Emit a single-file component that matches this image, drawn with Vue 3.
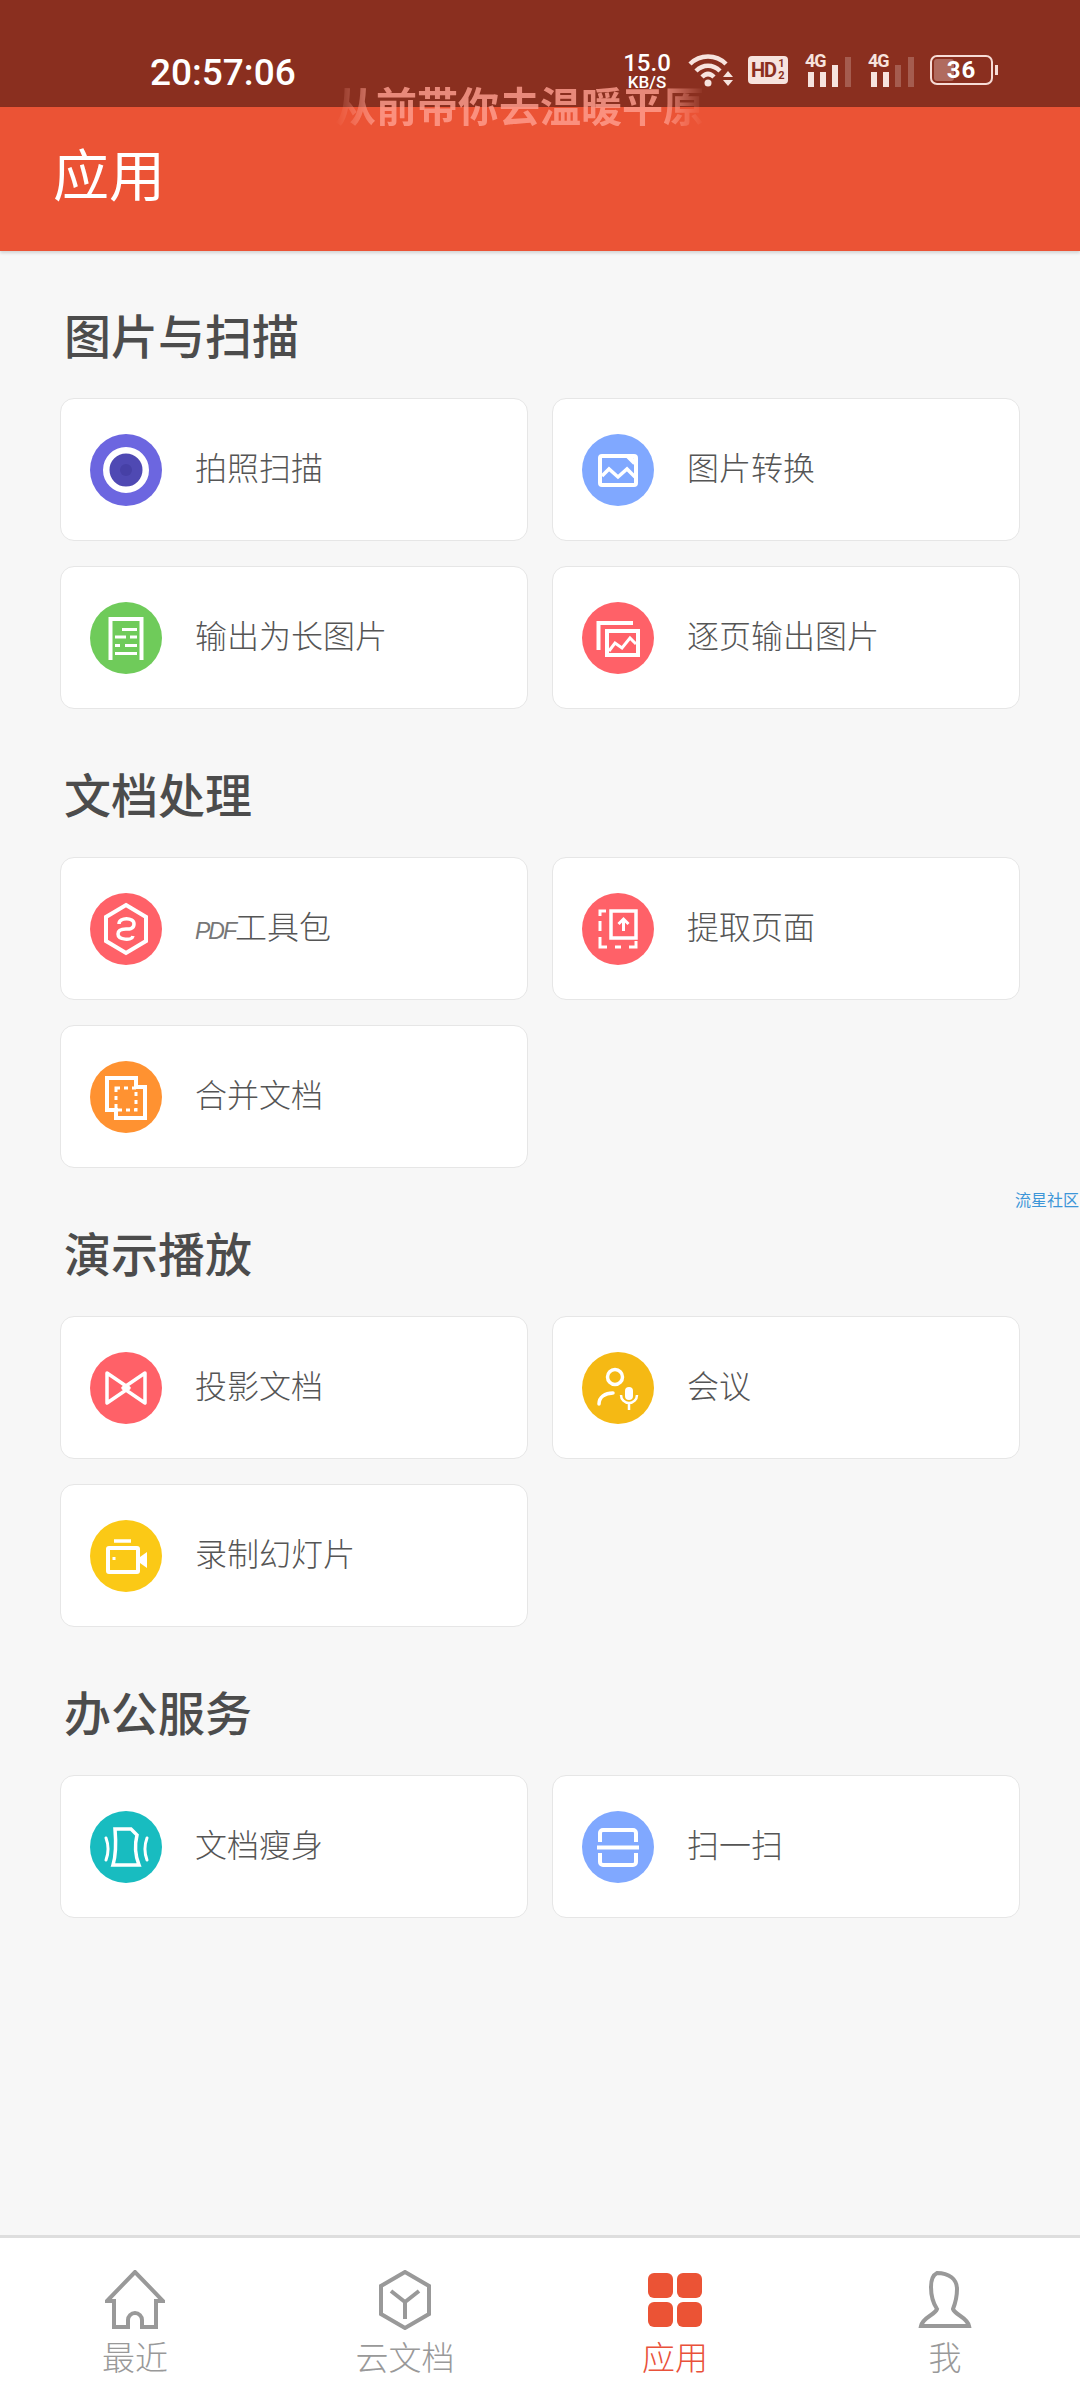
<script setup>
// icon bodies sit on a 72x72 coloured circle, white strokes by default
const icons = {
  camera: `<circle cx="36" cy="36" r="19.75" fill="#4f49b3" stroke="#fff" stroke-width="6.5"/><circle cx="36" cy="36" r="6" fill="#4640a6" stroke="none"/>`,
  image: `<rect x="18" y="22" width="36" height="29" rx="2"/><path d="M20 42L27 35L36 43L45 35L53 43" stroke-width="3.5"/><path d="M46 22L53 29" stroke-width="5" stroke="#fff"/>`,
  longimage: `<path d="M20.500 58V17H51.500V58"/><path d="M32 27.500H47M25 35H36M40 35H47M25 43.500H30M35 43.500H47M25 51.500H47" stroke-width="3"/>`,
  pages: `<path d="M16.500 48V21H51"/><rect x="25" y="29" width="31" height="24"/><path d="M27 49L33 41L40 46L48 36L54 42" stroke-width="3"/>`,
  pdf: `<path d="M36 12L56 24V48L36 60L16 48V24Z"/><path d="M29 31C29 24 44 24 44 31C44 37 37 36 36 36C35 36 28 36 28 41C28 47 42 48 43 43" stroke-width="3.500"/>`,
  extract: `<path d="M18 23V18H24M18 28V38M18 44V54H25M33 54H39M47 54H54V48" stroke-width="3"/><rect x="29" y="18" width="25" height="27" stroke-width="3.500"/><path d="M41.500 38V26M36.500 31L41.500 26L46.500 31" stroke-width="3"/>`,
  merge: `<path d="M17 17H46V26H55V57H26V49H17Z"/><rect x="26" y="27" width="20" height="22" stroke-width="3" stroke-dasharray="4 4"/>`,
  projector: `<path d="M17 21L39 36L17 51ZM55 21L33 36L55 51Z" stroke-width="3.500" stroke-linejoin="round"/>`,
  meeting: `<circle cx="33" cy="25" r="7.500" stroke-width="3.500"/><path d="M17 52C17 45 23 41 31 41" stroke-width="3.500" stroke-linecap="round"/><rect x="43" y="35" width="8" height="13" rx="4" fill="#fff" stroke="none"/><path d="M39 43A8 8 0 0 0 55 43M47 51V58" stroke-width="2.500"/>`,
  video: `<rect x="18" y="28" width="30" height="24" rx="1"/><path d="M24 21H41" stroke-width="3.500"/><path d="M50 37L57 32V48L50 43Z" fill="#fff" stroke="none"/><path d="M24 37V40" stroke-width="3"/>`,
  slim: `<path d="M25 18H41L47 24C45 32 45 44 49 54H23C26 44 26 30 25 18Z" stroke-width="3.500"/><path d="M16 27C19 35 19 41 16 49M57 27C54 35 54 41 57 49" stroke-width="3" stroke-linecap="round"/>`,
  scan: `<path d="M18 31V22A3 3 0 0 1 21 19H51A3 3 0 0 1 54 22V31M18 42V51A3 3 0 0 0 21 54H51A3 3 0 0 0 54 51V42"/><path d="M15 36.500H57"/>`,
}

const sections = [
  {
    title: '图片与扫描',
    items: [
      { label: '拍照扫描', icon: 'camera', color: '#6c66e0' },
      { label: '图片转换', icon: 'image', color: '#80a8ff' },
      { label: '输出为长图片', icon: 'longimage', color: '#6fcb5a' },
      { label: '逐页输出图片', icon: 'pages', color: '#ff6168' },
    ],
  },
  {
    title: '文档处理',
    items: [
      { prefix: 'PDF', label: '工具包', icon: 'pdf', color: '#ff6168' },
      { label: '提取页面', icon: 'extract', color: '#ff6168' },
      { label: '合并文档', icon: 'merge', color: '#ff9231' },
    ],
  },
  {
    title: '演示播放',
    items: [
      { label: '投影文档', icon: 'projector', color: '#ff6168' },
      { label: '会议', icon: 'meeting', color: '#f5b914' },
      { label: '录制幻灯片', icon: 'video', color: '#fbc916' },
    ],
  },
  {
    title: '办公服务',
    items: [
      { label: '文档瘦身', icon: 'slim', color: '#18bcc0' },
      { label: '扫一扫', icon: 'scan', color: '#80a8ff' },
    ],
  },
]

const tabs = [
  { label: '最近', svg: `<path d="M2 31L30 2L58 31H51V57H37V50A7 7 0 0 0 23 50V57H9V31Z"/>` },
  { label: '云文档', svg: `<path d="M30 2L54 16V44L30 58L6 44V16Z"/><path d="M16 21L30 32L44 21M30 32V49"/>` },
  {
    label: '应用',
    active: true,
    svg: `<g fill="#eb5335" stroke="none"><rect x="3" y="3" width="25" height="25" rx="6"/><rect x="32" y="3" width="25" height="25" rx="6"/><rect x="3" y="32" width="25" height="25" rx="6"/><rect x="32" y="32" width="25" height="25" rx="6"/></g>`,
  },
  { label: '我', svg: `<path d="M22 3C34 3 42 9 42 19C42 29 40 34 38 39C40 45 52 47 54 56H6C8 47 20 45 22 39C18 33 16 25 16 17C16 9 18 5 22 3Z"/>` },
]
</script>

<template>
  <div class="page">
    <div class="status-bar">
      <span class="clock">20:57:06</span>
      <div class="status-icons">
        <div class="speed">
          <span class="speed-num">15.0</span>
          <span class="speed-unit">KB/S</span>
        </div>
        <svg class="wifi" width="46" height="34" viewBox="0 0 46 34" fill="none" stroke="#f7e3de" stroke-width="4.500">
          <path d="M2 11C12 1 28 1 38 11M8 18C15 11 25 11 32 18M14 24C18 20 22 20 26 24"/>
          <circle cx="20" cy="30" r="3.500" fill="#f7e3de" stroke="none"/>
          <path d="M35 24L40 18L45 24ZM35 27L40 33L45 27Z" fill="#f7e3de" stroke="none"/>
        </svg>
        <div class="hd">HD<span class="hd-sub">1<br />2</span></div>
        <div v-for="n in [3, 2]" :key="n" class="signal">
          <span class="net">4G</span>
          <i v-for="b in 4" :key="b" :class="['bar', 'bar' + b, { off: b > n }]"></i>
        </div>
        <div class="battery">
          <div class="battery-level"></div>
          <span class="battery-num">36</span>
        </div>
      </div>
      <div class="ticker">从前带你去温暖平原</div>
    </div>

    <header class="app-bar">应用</header>

    <main class="content">
      <section v-for="s in sections" :key="s.title" class="group">
        <h2 class="group-title">{{ s.title }}</h2>
        <div class="grid">
          <div v-for="it in s.items" :key="it.label" class="card">
            <svg
              class="tool-icon"
              :style="{ background: it.color }"
              width="72"
              height="72"
              viewBox="0 0 72 72"
              fill="none"
              stroke="#fff"
              stroke-width="4"
              v-html="icons[it.icon]"
            ></svg>
            <span class="card-label"><span v-if="it.prefix" class="latin">{{ it.prefix }}</span>{{ it.label }}</span>
          </div>
        </div>
      </section>
    </main>

    <nav class="tabbar">
      <div v-for="t in tabs" :key="t.label" class="tab" :class="{ active: t.active }">
        <svg width="60" height="60" viewBox="0 0 60 60" fill="none" stroke="#999" stroke-width="4" v-html="t.svg"></svg>
        <span class="tab-label">{{ t.label }}</span>
      </div>
    </nav>

    <div class="side-mark">流星社区</div>
  </div>
</template>

<style>
html,
body {
  margin: 0;
  background: #f7f7f7;
}
</style>

<style scoped>
.page {
  position: relative;
  width: 1080px;
  height: 2400px;
  overflow: hidden;
  display: flex;
  flex-direction: column;
  background: #f7f7f7;
  font-family: "Noto Sans CJK SC", "Noto Sans", sans-serif;
}

.status-bar {
  position: relative;
  height: 107px;
  flex-shrink: 0;
  background: #8a2f1f;
  display: flex;
  align-items: flex-start;
  padding: 50px 87px 0 150px;
  box-sizing: border-box;
  color: #fbeeea;
}
.clock {
  font-family: Roboto, sans-serif;
  font-size: 37px;
  line-height: 46px;
  font-weight: 500;
  color: #fff;
}
.status-icons {
  margin-left: auto;
  display: flex;
  align-items: center;
  height: 40px;
  font-family: Roboto, sans-serif;
}
.speed {
  display: flex;
  flex-direction: column;
  align-items: center;
  width: 48px;
  margin-top: 2px;
  color: #fff;
  font-weight: 500;
}
.speed-num {
  font-size: 24px;
  line-height: 22px;
}
.speed-unit {
  font-size: 17px;
  line-height: 16px;
}
.wifi {
  margin-left: 17px;
}
.hd {
  margin-left: 14px;
  width: 40px;
  height: 28px;
  border-radius: 4px;
  background: #f7e3de;
  color: #8a2f1f;
  font-size: 20px;
  line-height: 28px;
  font-weight: 700;
  padding-left: 3px;
  box-sizing: border-box;
  display: flex;
  letter-spacing: -1px;
}
.hd-sub {
  font-size: 11px;
  line-height: 12px;
  margin: 2px 0 0 2px;
}
.signal {
  position: relative;
  width: 46px;
  height: 34px;
  margin-left: 17px;
}
.net {
  position: absolute;
  left: 0;
  top: -1px;
  font-size: 18px;
  line-height: 18px;
  font-weight: 700;
  color: #f7e3de;
  letter-spacing: -1px;
}
.bar {
  position: absolute;
  bottom: 0;
  width: 6px;
  background: #f7e3de;
}
.bar.off {
  background: rgba(247, 227, 222, 0.25);
}
.bar1 {
  left: 3px;
  height: 15px;
}
.bar2 {
  left: 15px;
  height: 15px;
}
.bar3 {
  left: 27px;
  height: 22px;
}
.bar4 {
  left: 40px;
  height: 30px;
}
.battery {
  position: relative;
  margin-left: 16px;
  width: 63px;
  height: 30px;
  border: 2px solid #f7dcd6;
  border-radius: 7px;
  box-sizing: border-box;
  text-align: center;
}
.battery::after {
  content: "";
  position: absolute;
  right: -7px;
  top: 8px;
  width: 3px;
  height: 10px;
  background: #f7dcd6;
}
.battery-level {
  position: absolute;
  left: 2px;
  top: 2px;
  bottom: 2px;
  width: 20px;
  border-radius: 3px;
  background: rgba(247, 220, 214, 0.35);
}
.battery-num {
  position: relative;
  font-size: 24px;
  line-height: 26px;
  font-weight: 700;
  color: #fff;
  letter-spacing: 1px;
}
.ticker {
  position: absolute;
  left: 335px;
  top: 82px;
  width: 370px;
  font-size: 41px;
  line-height: 44px;
  font-weight: 700;
  white-space: nowrap;
  color: rgba(255, 160, 145, 0.8);
  -webkit-mask-image: linear-gradient(90deg, transparent 0, #000 12%, #000 88%, transparent 100%);
  mask-image: linear-gradient(90deg, transparent 0, #000 12%, #000 88%, transparent 100%);
  z-index: 2;
}

.app-bar {
  height: 144px;
  flex-shrink: 0;
  padding: 30px 0 0 53px;
  box-sizing: border-box;
  background: #eb5335;
  color: #fff;
  font-size: 56px;
  line-height: 70px;
  box-shadow: 0 2px 3px rgba(0, 0, 0, 0.15);
  position: relative;
  z-index: 1;
}

.content {
  flex: 1;
  min-height: 0;
  margin-top: -1px;
}
.group-title {
  margin: 0;
  height: 148px;
  padding: 53px 0 0 64px;
  box-sizing: border-box;
  font-size: 47px;
  line-height: 62px;
  font-weight: 500;
  color: #4c4c4c;
}
.grid {
  display: grid;
  grid-template-columns: 468px 468px;
  column-gap: 24px;
  row-gap: 25px;
  padding-left: 60px;
}
.card {
  height: 143px;
  box-sizing: border-box;
  background: #fff;
  border: 1px solid #e6e6e6;
  border-radius: 14px;
  display: flex;
  align-items: center;
  padding-left: 29px;
}
.tool-icon {
  flex-shrink: 0;
  border-radius: 50%;
}
.card-label {
  margin-left: 33px;
  padding-bottom: 8px;
  font-size: 32px;
  font-weight: 300;
  color: #555;
}
.latin {
  font-family: "Liberation Sans", sans-serif;
  font-size: 23px;
  font-style: italic;
  letter-spacing: -2px;
  color: #777;
}

.tabbar {
  height: 165px;
  flex-shrink: 0;
  box-sizing: border-box;
  border-top: 3px solid #dedede;
  background: #fff;
  display: flex;
}
.tab {
  flex: 1;
  display: flex;
  flex-direction: column;
  align-items: center;
  padding-top: 32px;
  color: #999;
}
.tab.active {
  color: #e9513a;
}
.tab-label {
  font-size: 33px;
  line-height: 44px;
  font-weight: 300;
  margin-top: 4px;
}

.side-mark {
  position: absolute;
  left: 1015px;
  top: 1188px;
  font-size: 16px;
  line-height: 22px;
  white-space: nowrap;
  color: #3d96d8;
}
</style>
